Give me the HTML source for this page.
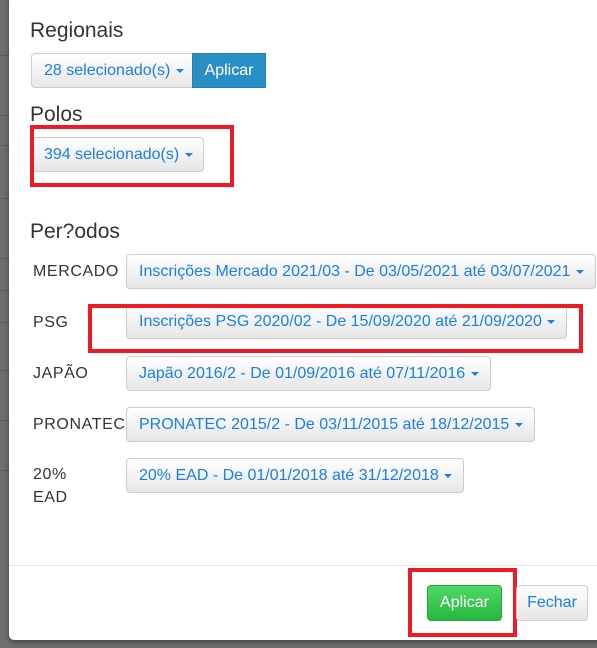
<!DOCTYPE html>
<html><head><meta charset="utf-8"><style>
*{box-sizing:border-box}
body{margin:0;width:597px;height:648px;overflow:hidden;background:#6f6f6f;font-family:"Liberation Sans",sans-serif;position:relative}
.bgline{position:absolute;left:0;width:9px;height:1px;background:#5e5e5e}
.modal{position:absolute;left:9px;top:-6px;width:600px;height:646px;background:#fff;border-radius:5px;box-shadow:0 2px 6px rgba(0,0,0,.4)}
.a{position:absolute}
.h{font-size:21px;color:#333}
.btn{position:absolute;height:35px;border:1px solid #ccc;border-radius:4px;background:linear-gradient(#fff,#e6e6e6);color:#1a7fe6;font-size:16px;line-height:33px;padding-left:12px;white-space:nowrap}
.car{display:inline-block;width:0;height:0;border-left:4px solid transparent;border-right:4px solid transparent;border-top:4px solid #1a7fe6;vertical-align:middle;margin-left:1px}
.lbl{position:absolute;left:33px;font-size:16px;color:#333;letter-spacing:.6px;line-height:23px}
.red{position:absolute;border:4px solid #ed1c24}
</style></head><body>
<div class="bgline" style="top:55px"></div><div class="bgline" style="top:115px"></div><div class="bgline" style="top:145px"></div><div class="bgline" style="top:198px"></div><div class="bgline" style="top:258px"></div><div class="bgline" style="top:290px"></div><div class="bgline" style="top:322px"></div><div class="bgline" style="top:370px"></div><div class="bgline" style="top:420px"></div><div class="bgline" style="top:470px"></div>
<div class="modal"></div>
<div class="a h" style="left:30px;top:19px">Regionais</div>
<div class="btn" style="left:31px;top:53px;width:163px;border-radius:4px 0 0 4px">28 selecionado(s) <span class="car"></span></div>
<div class="a" style="left:192px;top:53px;width:74px;height:35px;background:#2a8fc4;border:1px solid #2580b0;color:#fff;font-size:16px;line-height:33px;text-align:center">Aplicar</div>
<div class="a h" style="left:30px;top:103px">Polos</div>
<div class="btn" style="left:31px;top:137px;width:173px">394 selecionado(s) <span class="car"></span></div>
<div class="red" style="left:30px;top:125px;width:204px;height:62px"></div>
<div class="a h" style="left:30px;top:220px">Per?odos</div>
<div class="lbl" style="top:260px">MERCADO</div>
<div class="btn" style="left:126px;top:254px;width:470px">Inscrições Mercado 2021/03 - De 03/05/2021 até 03/07/2021 <span class="car"></span></div>
<div class="lbl" style="top:311px">PSG</div>
<div class="btn" style="left:126px;top:304px;width:441px">Inscrições PSG 2020/02 - De 15/09/2020 até 21/09/2020 <span class="car"></span></div>
<div class="red" style="left:88px;top:304px;width:495px;height:49px"></div>
<div class="lbl" style="top:362px">JAPÃO</div>
<div class="btn" style="left:126px;top:356px;width:365px">Japão 2016/2 - De 01/09/2016 até 07/11/2016 <span class="car"></span></div>
<div class="lbl" style="top:413px">PRONATEC</div>
<div class="btn" style="left:126px;top:407px;width:409px">PRONATEC 2015/2 - De 03/11/2015 até 18/12/2015 <span class="car"></span></div>
<div class="lbl" style="top:463px;line-height:23px">20%<br>EAD</div>
<div class="btn" style="left:126px;top:458px;width:338px">20% EAD - De 01/01/2018 até 31/12/2018 <span class="car"></span></div>
<div class="a" style="left:9px;top:565px;width:588px;height:1px;background:#e5e5e5"></div>
<div class="a" style="left:427px;top:585px;width:75px;height:36px;border:1px solid #2aa33e;border-radius:4px;background:linear-gradient(#4dd866,#27b83f);color:#fff;font-size:16px;line-height:34px;text-align:center">Aplicar</div>
<div class="red" style="left:408px;top:568px;width:109px;height:69px"></div>
<div class="btn" style="left:516px;top:585px;width:72px;height:36px;padding:0;text-align:center">Fechar</div>
</body></html>
